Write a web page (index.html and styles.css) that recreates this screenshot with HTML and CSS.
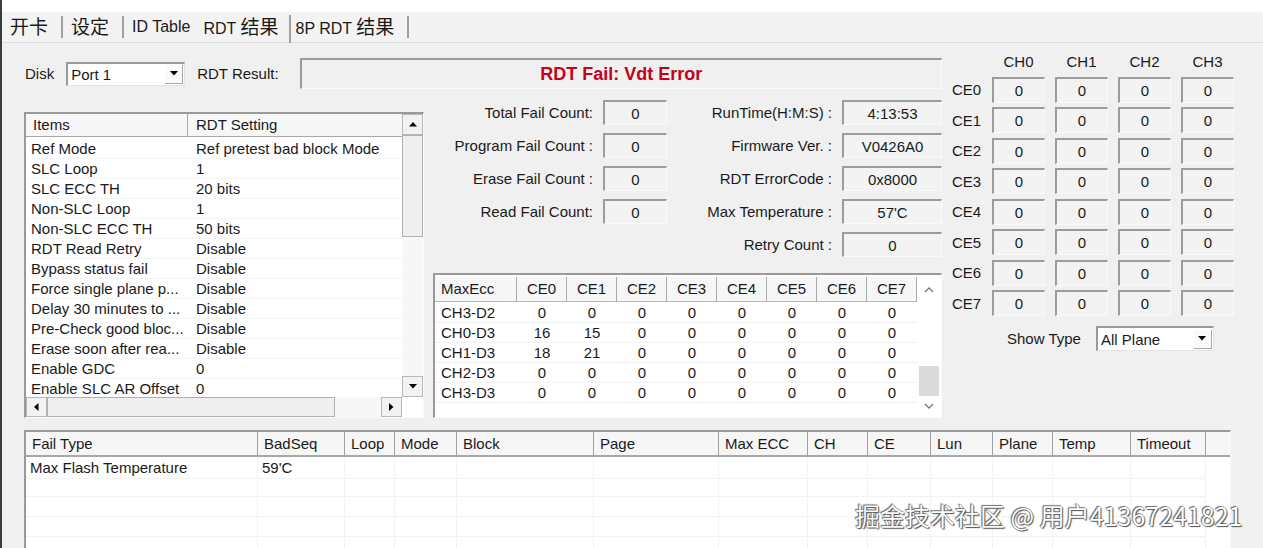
FILE: index.html
```html
<!DOCTYPE html>
<html lang="zh-CN">
<head>
  <meta charset="UTF-8">
  <meta name="viewport" content="width=device-width, initial-scale=1.0">
  <title>RDT 结果</title>
  <link rel="stylesheet" href="styles.css">
</head>
<body>
  <div class="topline"></div>

  <div class="tabs">
    <span class="tab first"><span class="cj">开卡</span></span><i class="sep"></i>
    <span class="tab"><span class="cj">设定</span></span><i class="sep"></i>
    <span class="tab">ID Table</span>
    <span class="tab active">RDT <span class="cj">结果</span></span><i class="sep tall"></i>
    <span class="tab next">8P RDT <span class="cj">结果</span></span><i class="sep"></i>
  </div>

  <div class="panel">
    <div class="upper">
      <div class="leftpart">
        <div class="result-row">
          <label class="disk-label">Disk</label>
          <div class="combo disk">
            <span class="combo-text">Port 1</span>
            <span class="drop"><svg width="8" height="5" viewBox="0 0 8 5"><path d="M0 0h8L4 4.5z"/></svg></span>
          </div>
          <label class="res-label">RDT Result:</label>
          <div class="result-box">RDT Fail: Vdt Error</div>
        </div>

        <div class="mid-row">
          <!-- rdt settings list -->
          <div class="listview settings">
            <div class="lv-main">
              <div class="lv-head">
                <span>Items</span><span>RDT Setting</span>
              </div>
              <div class="lv-rows">
                <div class="lv-row"><span>Ref Mode</span><span>Ref pretest bad block Mode</span></div>
                <div class="lv-row"><span>SLC Loop</span><span>1</span></div>
                <div class="lv-row"><span>SLC ECC TH</span><span>20 bits</span></div>
                <div class="lv-row"><span>Non-SLC Loop</span><span>1</span></div>
                <div class="lv-row"><span>Non-SLC ECC TH</span><span>50 bits</span></div>
                <div class="lv-row"><span>RDT Read Retry</span><span>Disable</span></div>
                <div class="lv-row"><span>Bypass status fail</span><span>Disable</span></div>
                <div class="lv-row"><span>Force single plane p...</span><span>Disable</span></div>
                <div class="lv-row"><span>Delay 30 minutes to ...</span><span>Disable</span></div>
                <div class="lv-row"><span>Pre-Check good bloc...</span><span>Disable</span></div>
                <div class="lv-row"><span>Erase soon after rea...</span><span>Disable</span></div>
                <div class="lv-row"><span>Enable GDC</span><span>0</span></div>
                <div class="lv-row"><span>Enable SLC AR Offset</span><span>0</span></div>
              </div>
            </div>
            <div class="vscroll">
              <span class="sbtn"><svg width="8" height="5" viewBox="0 0 8 5"><path d="M0 4.5L4 0l4 4.5z"/></svg></span>
              <span class="vthumb"></span>
              <span class="strack"></span>
              <span class="sbtn"><svg width="8" height="5" viewBox="0 0 8 5"><path d="M0 0h8L4 4.5z"/></svg></span>
            </div>
            <div class="hscroll">
              <span class="sbtn"><svg width="5" height="8" viewBox="0 0 5 8"><path d="M4.5 0v8L0 4z"/></svg></span>
              <span class="hthumb"></span>
              <span class="strack"></span>
              <span class="sbtn"><svg width="5" height="8" viewBox="0 0 5 8"><path d="M0 0v8l4.5-4z"/></svg></span>
            </div>
            <div class="corner"></div>
          </div>

          <div class="center">
            <div class="counts">
              <span class="lbl">Total Fail Count:</span><span class="val">0</span>
              <span class="lbl">RunTime(H:M:S) :</span><span class="val">4:13:53</span>
              <span class="lbl">Program Fail Count :</span><span class="val">0</span>
              <span class="lbl">Firmware Ver. :</span><span class="val">V0426A0</span>
              <span class="lbl">Erase Fail Count :</span><span class="val">0</span>
              <span class="lbl">RDT ErrorCode :</span><span class="val">0x8000</span>
              <span class="lbl">Read Fail Count:</span><span class="val">0</span>
              <span class="lbl">Max Temperature :</span><span class="val">57'C</span>
              <span></span><span></span>
              <span class="lbl">Retry Count :</span><span class="val">0</span>
            </div>

            <!-- max ecc per die -->
            <div class="listview ecc">
              <div class="ecc-main">
                <div class="ecc-head">
                  <span class="first">MaxEcc</span>
                  <span>CE0</span><span>CE1</span><span>CE2</span><span>CE3</span>
                  <span>CE4</span><span>CE5</span><span>CE6</span><span>CE7</span>
                </div>
                <div class="ecc-row"><span class="first">CH3-D2</span><span>0</span><span>0</span><span>0</span><span>0</span><span>0</span><span>0</span><span>0</span><span>0</span></div>
                <div class="ecc-row"><span class="first">CH0-D3</span><span>16</span><span>15</span><span>0</span><span>0</span><span>0</span><span>0</span><span>0</span><span>0</span></div>
                <div class="ecc-row"><span class="first">CH1-D3</span><span>18</span><span>21</span><span>0</span><span>0</span><span>0</span><span>0</span><span>0</span><span>0</span></div>
                <div class="ecc-row"><span class="first">CH2-D3</span><span>0</span><span>0</span><span>0</span><span>0</span><span>0</span><span>0</span><span>0</span><span>0</span></div>
                <div class="ecc-row"><span class="first">CH3-D3</span><span>0</span><span>0</span><span>0</span><span>0</span><span>0</span><span>0</span><span>0</span><span>0</span></div>
              </div>
              <div class="ecc-scroll">
                <svg class="chev up" width="10" height="6" viewBox="0 0 10 6"><polyline points="1,5 5,1 9,5" fill="none" stroke="#777" stroke-width="1.3"/></svg>
                <span class="ecc-thumb"></span>
                <svg class="chev down" width="10" height="6" viewBox="0 0 10 6"><polyline points="1,1 5,5 9,1" fill="none" stroke="#777" stroke-width="1.3"/></svg>
              </div>
            </div>
          </div>
        </div>
      </div>

      <!-- CE / CH matrix -->
      <div class="chpanel">
        <div class="chgrid">
          <span></span><span class="chh">CH0</span><span class="chh">CH1</span><span class="chh">CH2</span><span class="chh">CH3</span>
          <span class="ce">CE0</span><span class="val">0</span><span class="val">0</span><span class="val">0</span><span class="val">0</span>
          <span class="ce">CE1</span><span class="val">0</span><span class="val">0</span><span class="val">0</span><span class="val">0</span>
          <span class="ce">CE2</span><span class="val">0</span><span class="val">0</span><span class="val">0</span><span class="val">0</span>
          <span class="ce">CE3</span><span class="val">0</span><span class="val">0</span><span class="val">0</span><span class="val">0</span>
          <span class="ce">CE4</span><span class="val">0</span><span class="val">0</span><span class="val">0</span><span class="val">0</span>
          <span class="ce">CE5</span><span class="val">0</span><span class="val">0</span><span class="val">0</span><span class="val">0</span>
          <span class="ce">CE6</span><span class="val">0</span><span class="val">0</span><span class="val">0</span><span class="val">0</span>
          <span class="ce">CE7</span><span class="val">0</span><span class="val">0</span><span class="val">0</span><span class="val">0</span>
        </div>
        <div class="showtype">
          <label>Show Type</label>
          <div class="combo plane">
            <span class="combo-text">All Plane</span>
            <span class="drop"><svg width="8" height="5" viewBox="0 0 8 5"><path d="M0 0h8L4 4.5z"/></svg></span>
          </div>
        </div>
      </div>
    </div>

    <!-- fail log -->
    <div class="listview fails">
      <div class="fail-head">
        <span>Fail Type</span><span>BadSeq</span><span>Loop</span><span>Mode</span><span>Block</span>
        <span>Page</span><span>Max ECC</span><span>CH</span><span>CE</span><span>Lun</span>
        <span>Plane</span><span>Temp</span><span>Timeout</span><span class="rest"></span>
      </div>
      <div class="fail-row"><span>Max Flash Temperature</span><span>59'C</span><span></span><span></span><span></span><span></span><span></span><span></span><span></span><span></span><span></span><span></span><span></span></div>
      <div class="fail-row"><span></span><span></span><span></span><span></span><span></span><span></span><span></span><span></span><span></span><span></span><span></span><span></span><span></span></div>
      <div class="fail-row"><span></span><span></span><span></span><span></span><span></span><span></span><span></span><span></span><span></span><span></span><span></span><span></span><span></span></div>
      <div class="fail-row"><span></span><span></span><span></span><span></span><span></span><span></span><span></span><span></span><span></span><span></span><span></span><span></span><span></span></div>
      <div class="fail-row"><span></span><span></span><span></span><span></span><span></span><span></span><span></span><span></span><span></span><span></span><span></span><span></span><span></span></div>
    </div>
  </div>

  <div class="watermark">掘金技术社区 @ 用户41367241821</div>
</body>
</html>
```

FILE: styles.css
```css
* {
  box-sizing: border-box;
}
html, body {
  margin: 0;
}
body {
  position: relative;
  width: 1263px;
  height: 548px;
  overflow: hidden;
  font-family: "Liberation Sans", Arial, sans-serif;
  font-size: 15px;
  color: #1a1a1a;
  background-color: #f0f0f0;
  border-left: 2px solid #3c3c3c;
}
.cj {
  font-family: "Noto Sans CJK SC", sans-serif;
  font-size: 19px;
}

/* tab strip */
.topline {
  height: 12px;
  background-color: #fff;
}
.tabs {
  display: flex;
  align-items: center;
  height: 31px;
  font-size: 16px;
  background-color: #f3f3f3;
  border-bottom: 1px solid #dedede;
}
.tab {
  padding: 0 13px 0 8px;
  line-height: 24px;
}
.tab.active {
  margin-left: -8px;
  padding-right: 10px;
}
.tab.next {
  padding-left: 5px;
}
.sep {
  width: 2px;
  height: 22px;
  background-color: #a0a0a0;
}
.sep.tall {
  height: 28px;
  margin-top: 4px;
}

.panel {
  padding-left: 22px;
}
.upper {
  display: flex;
}
.leftpart {
  width: 918px;
}

/* disk + result */
.result-row {
  display: flex;
  align-items: center;
  height: 31px;
  margin-top: 15px;
}
.disk-label {
  margin-left: 1px;
  margin-right: 12px;
}
.combo {
  display: flex;
  align-items: center;
  height: 24px;
  background-color: #fff;
  border-top: 2px solid #9a9a9a;
  border-left: 2px solid #9a9a9a;
  border-right: 1px solid #e4e4e4;
  border-bottom: 1px solid #e4e4e4;
}
.combo.disk {
  width: 119px;
}
.combo.plane {
  width: 118px;
  height: 25px;
}
.combo-text {
  flex: 1;
  padding-left: 3px;
}
.drop {
  display: flex;
  align-items: center;
  justify-content: center;
  width: 18px;
  height: 19px;
  margin-right: 1px;
  background-color: #fafafa;
  border-right: 1px solid #a8a8a8;
  border-bottom: 1px solid #a8a8a8;
}
.res-label {
  margin-left: 12px;
  margin-right: 21px;
}
.result-box {
  flex: 1;
  height: 31px;
  line-height: 29px;
  text-align: center;
  font-size: 18px;
  font-weight: bold;
  color: #c5001a;
  border-top: 2px solid #9a9a9a;
  border-left: 2px solid #9a9a9a;
  border-right: 1px solid #fbfbfb;
  border-bottom: 1px solid #fbfbfb;
}

.mid-row {
  display: flex;
  margin-top: 11px;
}

/* sunken list boxes */
.listview {
  background-color: #fff;
  border-top: 2px solid #9a9a9a;
  border-left: 2px solid #9a9a9a;
  border-right: 1px solid #fbfbfb;
  border-bottom: 1px solid #fbfbfb;
}
.settings {
  display: grid;
  grid-template-columns: 1fr 21px;
  grid-template-rows: 1fr 20px;
  width: 400px;
  height: 306px;
  margin-top: 12px;
}
.lv-main {
  overflow: hidden;
}
.lv-head {
  display: grid;
  grid-template-columns: 161px 1fr;
  height: 23px;
  background-color: #f7f7f7;
  border-bottom: 1px solid #a8a8a8;
}
.lv-head span {
  line-height: 22px;
  padding-left: 7px;
}
.lv-head span + span {
  padding-left: 8px;
  border-left: 1px solid #a8a8a8;
}
.lv-rows {
  padding-top: 2px;
}
.lv-row {
  display: grid;
  grid-template-columns: 165px 1fr;
  height: 20px;
  line-height: 20px;
  border-bottom: 1px solid #f5f5f5;
}
.lv-row span {
  padding-left: 5px;
  white-space: nowrap;
}
.vscroll {
  display: flex;
  flex-direction: column;
  background-color: #f7f7f7;
}
.hscroll {
  display: flex;
  background-color: #f7f7f7;
}
.sbtn {
  display: flex;
  align-items: center;
  justify-content: center;
  flex: 0 0 21px;
  background-color: #f2f2f2;
  border: 1px solid #b8b8b8;
}
.vscroll .sbtn {
  height: 21px;
}
.vthumb {
  flex: 0 0 102px;
  background-color: #efefef;
  border: 1px solid #b0b0b0;
}
.hthumb {
  flex: 0 0 288px;
  background-color: #efefef;
  border: 1px solid #b0b0b0;
}
.strack {
  flex: 1;
}
.corner {
  background-color: #fff;
}

/* counters */
.center {
  width: 509px;
  margin-left: 9px;
}
.counts {
  display: grid;
  grid-template-columns: 160px 64px 155px 100px;
  grid-auto-rows: 25px;
  column-gap: 10px;
  row-gap: 8px;
}
.lbl {
  align-self: center;
  text-align: right;
  white-space: nowrap;
}
.val {
  display: flex;
  align-items: center;
  justify-content: center;
  background-color: #f3f3f3;
  border-top: 2px solid #9c9c9c;
  border-left: 2px solid #9c9c9c;
  border-right: 1px solid #fafafa;
  border-bottom: 1px solid #fafafa;
}

.ecc {
  display: flex;
  height: 145px;
  margin-top: 16px;
}
.ecc-main {
  width: 482px;
  padding-top: 2px;
}
.ecc-head, .ecc-row {
  display: grid;
  grid-template-columns: 82px repeat(8, 50px);
}
.ecc-head {
  height: 25px;
  margin-bottom: 1px;
}
.ecc-head span {
  line-height: 23px;
  text-align: center;
  background-color: #f6f6f6;
  border-right: 1px solid #a8a8a8;
  border-bottom: 1px solid #b8b8b8;
}
.ecc-head span.first, .ecc-row span.first {
  text-align: left;
  padding-left: 6px;
}
.ecc-row {
  height: 20px;
  line-height: 20px;
  border-bottom: 1px solid #f0f0f0;
}
.ecc-row span {
  text-align: center;
}
.ecc-scroll {
  display: flex;
  flex-direction: column;
  align-items: center;
  flex: 1;
}
.chev.up {
  margin-top: 12px;
}
.ecc-thumb {
  width: 20px;
  height: 30px;
  margin-top: 73px;
  background-color: #dadada;
}
.chev.down {
  margin-top: 7px;
}

/* CE x CH matrix */
.chpanel {
  padding: 9px 0 0 10px;
}
.chgrid {
  display: grid;
  grid-template-columns: 30px repeat(4, 53px);
  grid-template-rows: 20px;
  grid-auto-rows: 26px;
  column-gap: 10px;
  row-gap: 4.5px;
}
.chh {
  text-align: center;
  line-height: 20px;
}
.ce {
  align-self: center;
}
.showtype {
  display: flex;
  align-items: center;
  margin-top: 10px;
  padding-left: 55px;
}
.showtype label {
  margin-right: 15px;
}

/* fail log table */
.fails {
  width: 1207px;
  height: 130px;
  margin-top: 12px;
}
.fail-head, .fail-row {
  display: grid;
  grid-template-columns: 232px 87px 50px 62px 137px 125px 89px 60px 63px 62px 60px 78px 75px 1fr;
}
.fail-head {
  height: 25px;
  background-color: #f6f6f6;
  border-bottom: 2px solid #a8a8a8;
}
.fail-head span {
  line-height: 24px;
  padding-left: 6px;
  border-right: 1px solid #a0a0a0;
}
.fail-head span.rest {
  border-right: none;
}
.fail-row {
  height: 20px;
  line-height: 21px;
}
.fail-row span {
  padding-left: 4px;
  white-space: nowrap;
  border-right: 1px solid #f2f2f2;
  border-bottom: 1px solid #f2f2f2;
}

.watermark {
  position: absolute;
  left: 853px;
  top: 497px;
  font-family: "Noto Sans CJK SC", sans-serif;
  font-size: 25px;
  color: #fff;
  text-shadow: 0 0 1px #333, 1px 1px 1px #555, -1px -1px 1px #777;
  white-space: nowrap;
}
```
